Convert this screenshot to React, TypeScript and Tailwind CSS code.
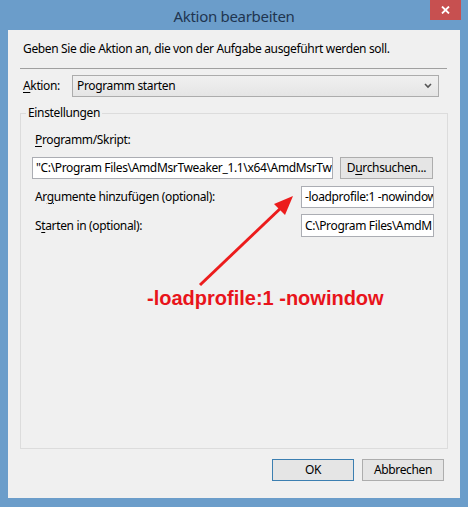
import React from 'react'

const ui = { fontFamily: '"Noto Sans", "Open Sans", sans-serif' }

function Field({ text, className }: { text: string; className: string }) {
    return (
        <div className={`shrink-0 h-[22px] bg-white border border-[#abadb3] pl-[3px] pr-[1px] flex items-center overflow-hidden whitespace-nowrap text-[12px] text-black ${className}`}>
            {text}
        </div>
    )
}

function Button({ children, primary }: { children: React.ReactNode; primary?: boolean }) {
    return (
        <div
            className={`h-[22px] w-[82px] flex items-center justify-center text-[12px] text-black bg-[#e5e5e5] border ${primary ? 'border-[#3c7fb1]' : 'border-[#adadad]'}`}
        >
            {children}
        </div>
    )
}

export default function App() {
    return (
        <div className="w-[468px] h-[507px] bg-[#6b9dca] flex flex-col" style={ui}>
            {/* Title bar */}
            <div className="relative h-[30px] flex items-center justify-center pt-[2px]">
                <span className="text-[15px] tracking-[-0.3px] text-[#1f3550]">Aktion bearbeiten</span>
                <div className="absolute right-[7px] top-0 w-[31px] h-[20px] bg-[#c75050] flex items-center justify-center">
                    <svg width="9" height="8" viewBox="0 0 9 8">
                        <path d="M1 0.5 L8 7.5 M8 0.5 L1 7.5" stroke="#fff" strokeWidth="1.8" />
                    </svg>
                </div>
            </div>

            {/* Client area */}
            <div className="relative mx-[8px] h-[468px] bg-[#f0f0f0] flex flex-col text-[12px] tracking-[-0.35px] text-black">
                <div className="pt-[11px] pl-[15px] leading-[16px]">
                    Geben Sie die Aktion an, die von der Aufgabe ausgeführt werden soll.
                </div>
                <div className="mt-[11px] ml-[12px] mr-[13px] h-px bg-[#a0a0a0]" />

                {/* Aktion */}
                <div className="mt-[6px] flex items-center pl-[15px] pr-[21px]">
                    <span className="w-[49px] leading-[16px]">
                        <span className="underline underline-offset-2">A</span>ktion:
                    </span>
                    <div className="flex-1 h-[22px] border border-[#acacac] bg-gradient-to-b from-[#f0f0f0] to-[#e5e5e5] flex items-center pl-[4px] pr-[6px]">
                        <span className="flex-1">Programm starten</span>
                        <svg width="8" height="6" viewBox="0 0 8 6">
                            <path d="M1 1 L4 4 L7 1" stroke="#555" strokeWidth="1.6" fill="none" />
                        </svg>
                    </div>
                </div>

                {/* Einstellungen */}
                <fieldset className="mt-[8px] ml-[12px] w-[428px] h-[344px] border border-[#dcdcdc] px-0">
                    <legend className="ml-[5px] px-[2px] leading-[16px]">Einstellungen</legend>
                    <div className="pl-[11px] pr-[13px] flex flex-col">
                        <div className="mt-[11px] pl-[3px] leading-[16px]">
                            <span className="underline underline-offset-2">P</span>rogramm/Skript:
                        </div>
                        <div className="mt-[9px] flex gap-[7px]">
                            <Field className="w-[301px] h-[21px]" text={'"C:\\Program Files\\AmdMsrTweaker_1.1\\x64\\AmdMsrTw'} />
                            <div className="shrink-0 h-[22px] w-[93px] flex items-center justify-center bg-[#e5e5e5] border border-[#adadad]">
                                D<span className="underline underline-offset-2">u</span>rchsuchen...
                            </div>
                        </div>
                        <div className="mt-[7px] flex items-center justify-between">
                            <span className="pl-[3px] leading-[16px]">
                                Ar<span className="underline underline-offset-2">g</span>umente hinzufügen (optional):
                            </span>
                            <Field className="w-[133px]" text="-loadprofile:1 -nowindow" />
                        </div>
                        <div className="mt-[6px] flex items-center justify-between">
                            <span className="pl-[3px] leading-[16px]">
                                S<span className="underline underline-offset-2">t</span>arten in (optional):
                            </span>
                            <Field className="w-[133px] h-[23px]" text="C:\Program Files\AmdM" />
                        </div>
                    </div>
                </fieldset>

                {/* Buttons */}
                <div className="mt-[10px] flex justify-end gap-[8px] pr-[16px]">
                    <Button primary>OK</Button>
                    <Button>Abbrechen</Button>
                </div>

                {/* Annotation */}
                <svg className="absolute left-0 top-0 pointer-events-none" width="452" height="468">
                    <line x1="192" y1="255" x2="276" y2="175" stroke="#ec1c1c" strokeWidth="3" />
                    <polygon points="285,166 266,174 277,185" fill="#ec1c1c" />
                </svg>
                <div
                    className="absolute left-[139px] top-[256px] text-[20px] leading-[24px] tracking-normal font-bold text-[#e8141b]"
                    style={{ fontFamily: '"Liberation Sans", Arial, sans-serif' }}
                >
                    -loadprofile:1 -nowindow
                </div>
            </div>
        </div>
    )
}
